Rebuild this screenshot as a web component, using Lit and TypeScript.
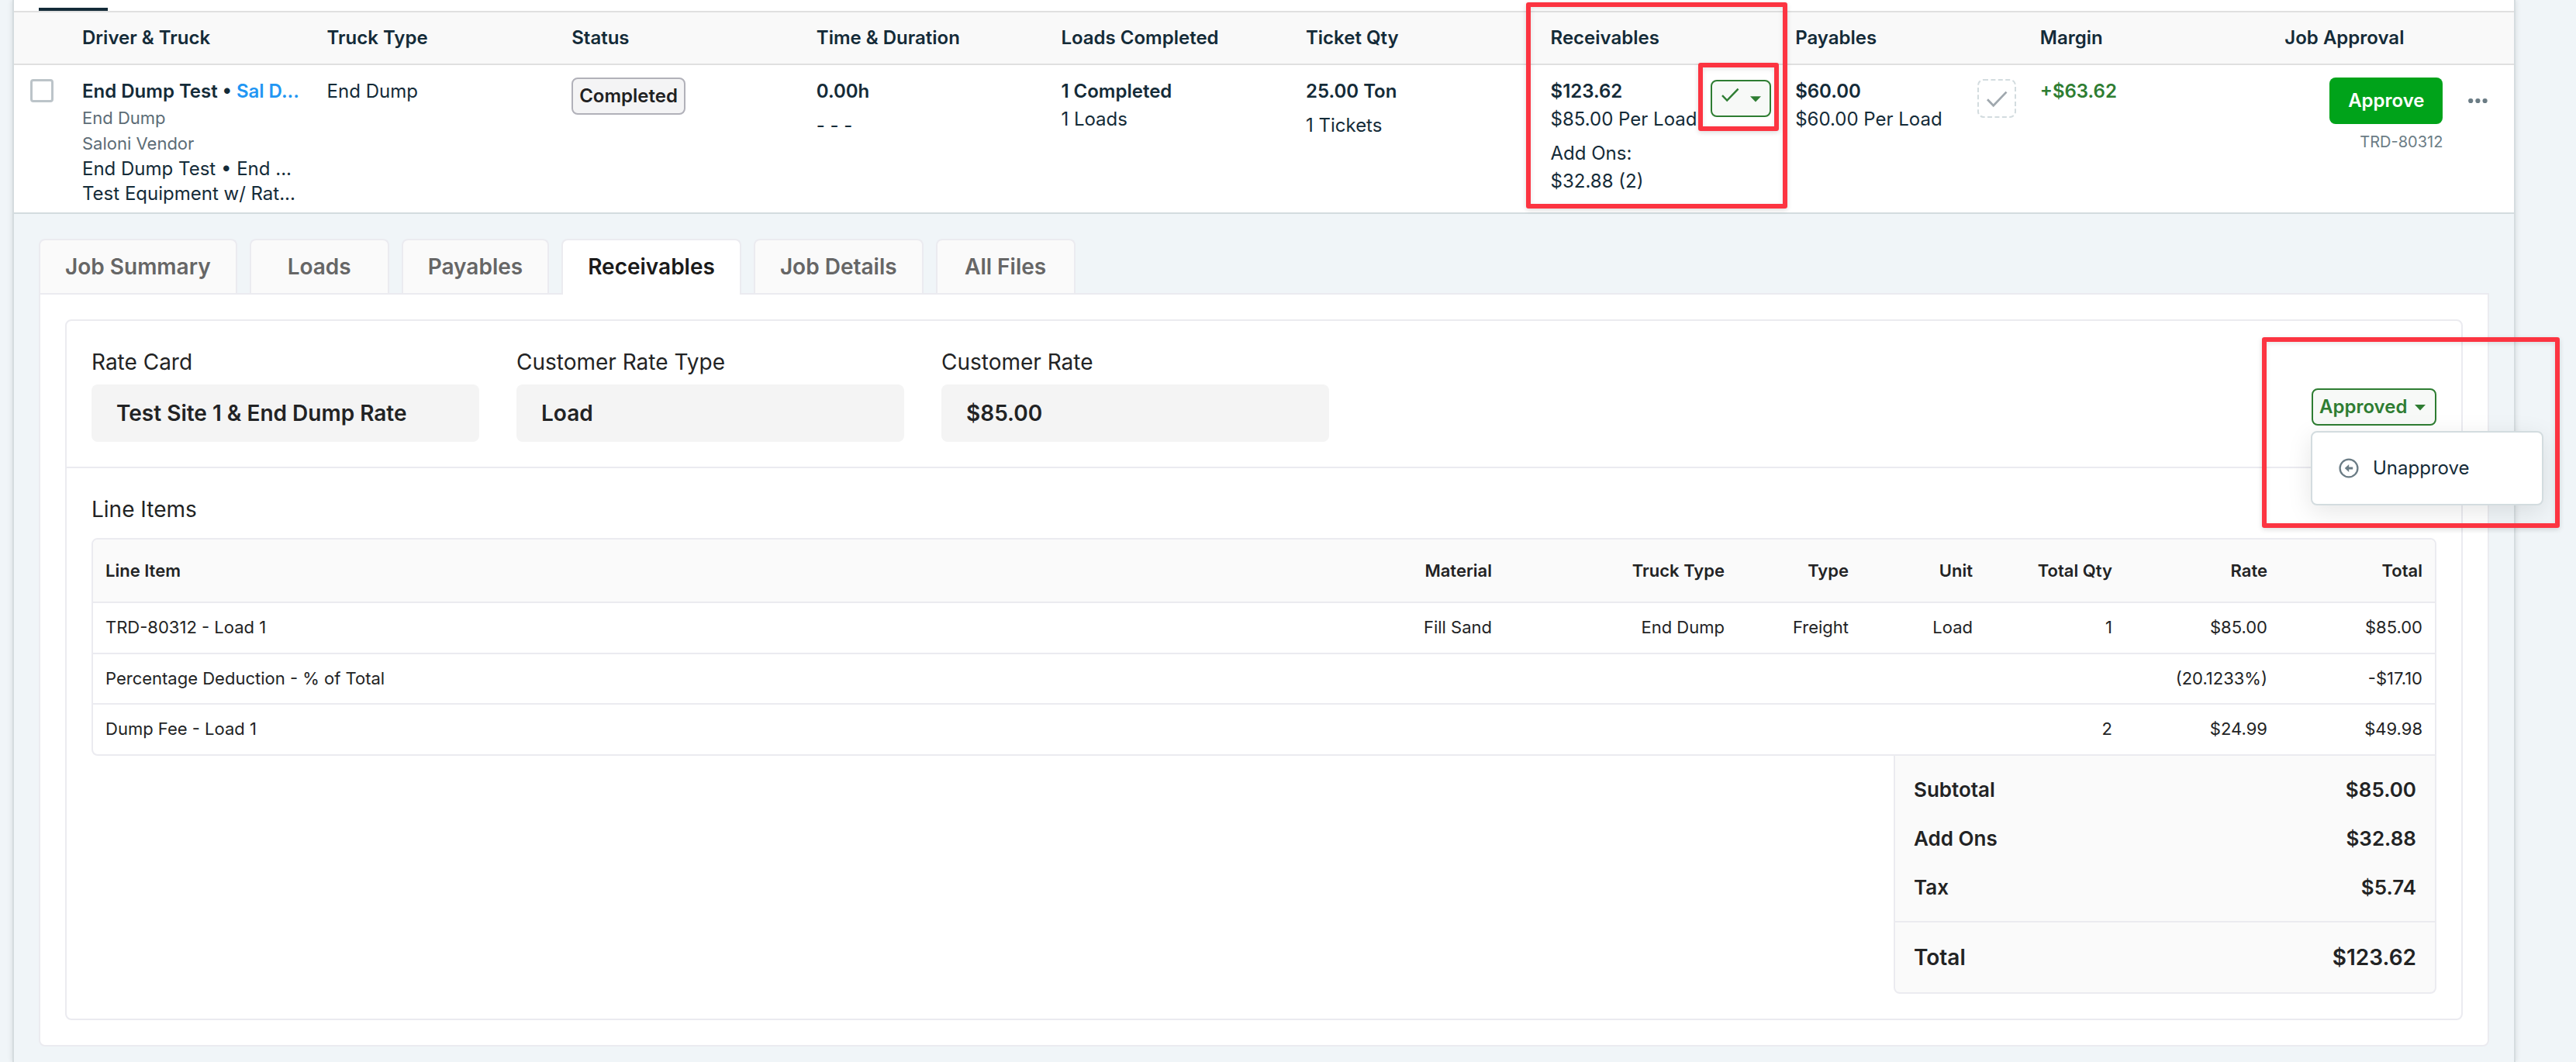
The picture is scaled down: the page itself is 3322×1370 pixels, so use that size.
import { LitElement, html, css, svg } from 'lit';
import { customElement, property, state } from 'lit/decorators.js';
import { classMap } from 'lit/directives/class-map.js';

interface LineItem {
  name: string;
  material?: string;
  truckType?: string;
  type?: string;
  unit?: string;
  qty?: string;
  rate: string;
  total: string;
}

const COLUMNS = [
  'Driver & Truck',
  'Truck Type',
  'Status',
  'Time & Duration',
  'Loads Completed',
  'Ticket Qty',
  'Receivables',
  'Payables',
  'Margin',
  'Job Approval',
];

const TABS = ['Job Summary', 'Loads', 'Payables', 'Receivables', 'Job Details', 'All Files'];

const FIELDS = [
  { label: 'Rate Card', value: 'Test Site 1 & End Dump Rate' },
  { label: 'Customer Rate Type', value: 'Load' },
  { label: 'Customer Rate', value: '$85.00' },
];

const LINE_COLUMNS = ['Line Item', 'Material', 'Truck Type', 'Type', 'Unit', 'Total Qty', 'Rate', 'Total'];

const LINE_ITEMS: LineItem[] = [
  {
    name: 'TRD-80312 - Load 1',
    material: 'Fill Sand',
    truckType: 'End Dump',
    type: 'Freight',
    unit: 'Load',
    qty: '1',
    rate: '$85.00',
    total: '$85.00',
  },
  { name: 'Percentage Deduction - % of Total', rate: '(20.1233%)', total: '-$17.10' },
  { name: 'Dump Fee - Load 1', qty: '2', rate: '$24.99', total: '$49.98' },
];

const TOTALS = [
  { label: 'Subtotal', value: '$85.00' },
  { label: 'Add Ons', value: '$32.88' },
  { label: 'Tax', value: '$5.74' },
];

const caret = svg`<path d="M0 0h14l-7 7.4z" fill="currentColor" />`;

/**
 * Job row of the dispatch table
 *
 * @element job-row
 */
@customElement('job-row')
export class JobRow extends LitElement {
  static styles = css`
    :host {
      display: block;
      color: #142b38;
      font-size: 24px;
    }

    .grid {
      display: grid;
      grid-template-columns: repeat(9, 315.6px) 1fr;
      padding-left: 88px;
      box-sizing: border-box;
    }

    .head {
      height: 70px;
      padding-bottom: 1px;
      align-items: center;
      background: #f9f9f9;
      border-top: 2px solid #e0e0e0;
      border-bottom: 2px solid #e0e0e0;
      font-weight: 600;
    }

    .body {
      display: grid;
      grid-template-columns: 88px 1fr;
      height: 192px;
      box-sizing: border-box;
      background: #fff;
      border-bottom: 2px solid #d3dcdf;
    }

    .body .grid {
      padding-left: 0;
    }

    .checkbox {
      width: 30px;
      height: 30px;
      margin: 18px 0 0 21px;
      box-sizing: border-box;
      border: 3px solid #bcc4c9;
      border-radius: 4px;
    }

    .cell {
      display: flex;
      flex-direction: column;
      padding-top: 16px;
      line-height: 36px;
      white-space: nowrap;
    }

    .cell--split {
      flex-direction: row;
      justify-content: space-between;
      padding-right: 31.2px;
    }

    .strong {
      font-weight: 600;
    }

    .link {
      color: #2196f3;
      font-weight: 600;
    }

    .muted {
      color: #5c6c76;
      font-size: 22px;
      line-height: 33px;
    }

    .truck {
      line-height: 32px;
    }

    .spaced {
      margin-top: 8px;
    }

    .badge {
      align-self: flex-start;
      padding: 0 8px;
      line-height: 44px;
      border: 2px solid #b1b1b9;
      border-radius: 8px;
      background: #f4f4f5;
      color: #1f2122;
      font-weight: 600;
    }

    .approved {
      display: flex;
      width: 78px;
      height: 48px;
      margin-top: 3px;
      box-sizing: border-box;
      border: 2px solid #2e7d32;
      border-radius: 8px;
      background: #f7f9f7;
      color: #2e7d32;
    }

    .pending {
      width: 50px;
      height: 50px;
      margin-top: 2px;
      color: #a0a8ae;
    }

    .margin {
      color: #2e7d32;
      font-weight: 600;
    }

    .approval {
      display: flex;
      align-items: flex-start;
      gap: 33px;
      padding: 16px 0 0 58px;
    }

    .approval__main {
      display: flex;
      flex-direction: column;
      align-items: flex-end;
      gap: 6px;
    }

    .approve {
      width: 146px;
      height: 60px;
      padding: 0 0 1px;
      border: 0;
      border-radius: 8px;
      background: #00a31a;
      color: #fff;
      font: 600 24px Inter, sans-serif;
    }

    .ticket {
      color: #6b7c85;
      font-size: 20px;
      line-height: 34px;
    }

    .more {
      width: 25px;
      height: 60px;
      color: #6b7c85;
    }
  `;

  render() {
    return html`
      <div class="grid head">${COLUMNS.map((c) => html`<div>${c}</div>`)}</div>
      <div class="body">
        <div class="checkbox"></div>
        <div class="grid">
          <div class="cell">
            <div><span class="strong">End Dump Test • </span><span class="link">Sal D...</span></div>
            <div class="muted">End Dump</div>
            <div class="muted">Saloni Vendor</div>
            <div class="truck">End Dump Test • End ...</div>
            <div class="truck">Test Equipment w/ Rat...</div>
          </div>
          <div class="cell">End Dump</div>
          <div class="cell"><span class="badge">Completed</span></div>
          <div class="cell">
            <div class="strong">0.00h</div>
            <div class="spaced">- - -</div>
          </div>
          <div class="cell">
            <div class="strong">1 Completed</div>
            <div>1 Loads</div>
          </div>
          <div class="cell">
            <div class="strong">25.00 Ton</div>
            <div class="spaced">1 Tickets</div>
          </div>
          <div class="cell cell--split">
            <div>
              <div class="strong">$123.62</div>
              <div>$85.00 Per Load</div>
              <div class="spaced">Add Ons:</div>
              <div>$32.88 (2)</div>
            </div>
            <div class="approved">
              <svg width="74" height="44" viewBox="0 0 74 44">
                <path d="M13 18.2l6.2 6.4L33.6 9.6" fill="none" stroke="currentColor" stroke-width="2.4" />
                <g transform="translate(49 19.2)">${caret}</g>
              </svg>
            </div>
          </div>
          <div class="cell cell--split">
            <div>
              <div class="strong">$60.00</div>
              <div>$60.00 Per Load</div>
            </div>
            <svg class="pending" viewBox="0 0 50 50">
              <rect
                x="1"
                y="1"
                width="48"
                height="48"
                rx="7"
                fill="none"
                stroke="#d3dcdf"
                stroke-width="2"
                stroke-dasharray="6 3.4"
              />
              <path d="M13 26.3l7.7 8L37.5 16.6" fill="none" stroke="currentColor" stroke-width="2.7" />
            </svg>
          </div>
          <div class="cell"><div class="margin">+$63.62</div></div>
          <div class="approval">
            <div class="approval__main">
              <button class="approve">Approve</button>
              <span class="ticket">TRD-80312</span>
            </div>
            <svg class="more" viewBox="0 0 25 60" fill="currentColor">
              <circle cx="3.2" cy="30" r="3.1" />
              <circle cx="12.4" cy="30" r="3.1" />
              <circle cx="21.6" cy="30" r="3.1" />
            </svg>
          </div>
        </div>
      </div>
    `;
  }
}

/**
 * Highlight frame drawn over the page
 *
 * @element callout-box
 */
@customElement('callout-box')
export class CalloutBox extends LitElement {
  static styles = css`
    :host {
      display: block;
      box-sizing: border-box;
      border: 6px solid #fc3441;
      border-radius: 3px;
      box-shadow: 0 2px 6px rgba(0, 0, 0, 0.14), inset 0 2px 6px rgba(0, 0, 0, 0.1);
      pointer-events: none;
    }
  `;
}

/**
 * Approval status button with its menu
 *
 * @element approval-menu
 */
@customElement('approval-menu')
export class ApprovalMenu extends LitElement {
  static styles = css`
    :host {
      display: block;
      position: relative;
    }

    .trigger {
      display: flex;
      align-items: center;
      gap: 10px;
      width: 161px;
      height: 48px;
      padding: 0 0 2px 8px;
      box-sizing: border-box;
      border: 2px solid #2e7d32;
      border-radius: 8px;
      background: #f7f9f7;
      color: #2e7d32;
      font: 600 24px Inter, sans-serif;
    }

    .caret {
      margin-top: 3px;
    }

    .menu {
      position: absolute;
      z-index: 1;
      top: 55px;
      left: -1px;
      display: flex;
      align-items: center;
      gap: 18px;
      width: 300px;
      height: 96px;
      padding: 0 0 1px 34px;
      box-sizing: border-box;
      border: 2px solid #d3dcdf;
      border-radius: 8px;
      background: #fff;
      box-shadow: 0 8px 32px rgba(0, 0, 0, 0.1);
      color: #142b38;
      font-size: 24px;
    }

    .icon {
      color: #6b7c85;
    }
  `;

  @property({ type: Boolean })
  open = false;

  private toggle() {
    this.open = !this.open;
  }

  render() {
    return html`
      <button class="trigger" @click=${this.toggle}>
        Approved
        <svg class="caret" width="14" height="8" viewBox="0 0 14 8">${caret}</svg>
      </button>
      ${this.open
        ? html`
            <div class="menu">
              <svg class="icon" width="26" height="26" viewBox="0 0 26 26">
                <circle cx="13" cy="13" r="11.4" fill="none" stroke="currentColor" stroke-width="2.3" />
                <path d="M7.8 13l5.4-5v3.6h5v2.8h-5V18z" fill="currentColor" />
              </svg>
              <span>Unapprove</span>
            </div>
          `
        : ''}
    `;
  }
}

@customElement('app-root')
export class AppRoot extends LitElement {
  static styles = css`
    :host {
      display: block;
      position: relative;
      height: 1370px;
      overflow: hidden;
      padding: 0 78px 0 16px;
      box-sizing: border-box;
      background: #f0f5f8;
      color: #222324;
      font-family: Inter, sans-serif;
    }

    .sheet {
      height: 1370px;
      box-sizing: border-box;
      border: solid #d5dcdf;
      border-width: 0 2px;
      box-shadow: 0 0 7px rgba(0, 0, 0, 0.12);
    }

    .strip {
      display: flex;
      align-items: flex-end;
      height: 14px;
      padding-left: 32px;
      background: #fff;
    }

    .strip__active {
      width: 89px;
      height: 4px;
      background: #142b38;
    }

    .detail {
      padding: 32px 32px 0;
    }

    .tabs {
      display: flex;
      gap: 16px;
      position: relative;
    }

    .tab {
      min-width: 180px;
      height: 70px;
      padding: 0 32px;
      box-sizing: border-box;
      border: 2px solid #ebebf0;
      border-bottom: 0;
      border-radius: 8px 8px 0 0;
      background: #fafafa;
      color: #666;
      font-size: 28px;
      font-weight: 600;
      line-height: 69px;
      text-align: center;
    }

    .tab--active {
      height: 72px;
      margin-bottom: -2px;
      background: #fff;
      color: #1a1a1a;
    }

    .panel {
      padding: 32px;
      border: 2px solid #ebebf0;
      border-radius: 0 0 8px 8px;
      background: #fff;
    }

    .card {
      border: 2px solid #ebebf0;
      border-radius: 8px;
    }

    .summary {
      display: flex;
      gap: 48px;
      height: 190px;
      padding: 32px 32px 0;
      box-sizing: border-box;
      border-bottom: 2px solid #ebebf0;
    }

    .field {
      width: 500px;
      font-size: 28px;
    }

    .field__label {
      height: 50px;
      line-height: 42px;
    }

    .field__value {
      height: 74px;
      padding-left: 32px;
      box-sizing: border-box;
      border-radius: 8px;
      background: #f4f4f4;
      font-weight: 600;
      line-height: 74px;
    }

    .summary approval-menu {
      margin: 55px 0 0 auto;
    }

    .items {
      padding: 32px;
    }

    .items__title {
      height: 58px;
      font-size: 28px;
      line-height: 42px;
    }

    .table {
      border: 2px solid #ebebf0;
      border-radius: 8px 8px 0 8px;
      font-size: 22px;
      overflow: hidden;
    }

    .line {
      display: grid;
      grid-template-columns: 1fr 300px 300px 160px 160px 180px 200px 200px;
      align-items: center;
      height: 65.6px;
      padding-bottom: 1px;
      box-sizing: border-box;
      border-top: 2px solid #ebebf0;
    }

    .line--head {
      height: 80px;
      padding-bottom: 0;
      border-top: 0;
      background: #fafafa;
      font-weight: 600;
    }

    .line > div {
      padding: 0 16px;
      text-align: right;
      white-space: nowrap;
    }

    .line > div:first-child {
      text-align: left;
    }

    .totals {
      width: 700px;
      margin-left: auto;
      box-sizing: border-box;
      border: 2px solid #ebebf0;
      border-top: 0;
      border-radius: 0 0 8px 8px;
      background: #fafafa;
      font-size: 26px;
      font-weight: 600;
    }

    .totals__group {
      padding: 12px 24px;
      border-bottom: 2px solid #ebebf0;
    }

    .totals__row {
      display: flex;
      justify-content: space-between;
      line-height: 63px;
    }

    .totals__row--grand {
      padding: 0 24px;
      font-size: 28px;
      line-height: 90px;
    }

    /* Callouts float above the page */
    .callout {
      position: absolute;
      z-index: 2;
    }

    .callout--column {
      left: 1968px;
      top: 3px;
      width: 337px;
      height: 266px;
    }

    .callout--status {
      left: 2190px;
      top: 81px;
      width: 104px;
      height: 88px;
    }

    .callout--menu {
      left: 2917px;
      top: 435px;
      width: 384px;
      height: 246px;
    }
  `;

  @state()
  private activeTab = 'Receivables';

  private renderTab(name: string) {
    const classes = { tab: true, 'tab--active': name === this.activeTab };
    return html`<div class=${classMap(classes)} @click=${() => (this.activeTab = name)}>${name}</div>`;
  }

  private renderLine(item: LineItem) {
    return html`
      <div class="line">
        <div>${item.name}</div>
        <div>${item.material}</div>
        <div>${item.truckType}</div>
        <div>${item.type}</div>
        <div>${item.unit}</div>
        <div>${item.qty}</div>
        <div>${item.rate}</div>
        <div>${item.total}</div>
      </div>
    `;
  }

  render() {
    return html`
      <div class="sheet">
        <div class="strip"><div class="strip__active"></div></div>
        <job-row></job-row>
        <div class="detail">
          <div class="tabs">${TABS.map((t) => this.renderTab(t))}</div>
          <div class="panel">
            <div class="card">
              <div class="summary">
                ${FIELDS.map(
                  (f) => html`
                    <div class="field">
                      <div class="field__label">${f.label}</div>
                      <div class="field__value">${f.value}</div>
                    </div>
                  `
                )}
                <approval-menu open></approval-menu>
              </div>
              <div class="items">
                <div class="items__title">Line Items</div>
                <div class="table">
                  <div class="line line--head">${LINE_COLUMNS.map((c) => html`<div>${c}</div>`)}</div>
                  ${LINE_ITEMS.map((i) => this.renderLine(i))}
                </div>
                <div class="totals">
                  <div class="totals__group">
                    ${TOTALS.map(
                      (t) => html`<div class="totals__row"><span>${t.label}</span><span>${t.value}</span></div>`
                    )}
                  </div>
                  <div class="totals__row totals__row--grand"><span>Total</span><span>$123.62</span></div>
                </div>
              </div>
            </div>
          </div>
        </div>
      </div>
      <callout-box class="callout callout--column"></callout-box>
      <callout-box class="callout callout--status"></callout-box>
      <callout-box class="callout callout--menu"></callout-box>
    `;
  }
}

declare global {
  interface HTMLElementTagNameMap {
    'app-root': AppRoot;
    'approval-menu': ApprovalMenu;
    'callout-box': CalloutBox;
    'job-row': JobRow;
  }
}
